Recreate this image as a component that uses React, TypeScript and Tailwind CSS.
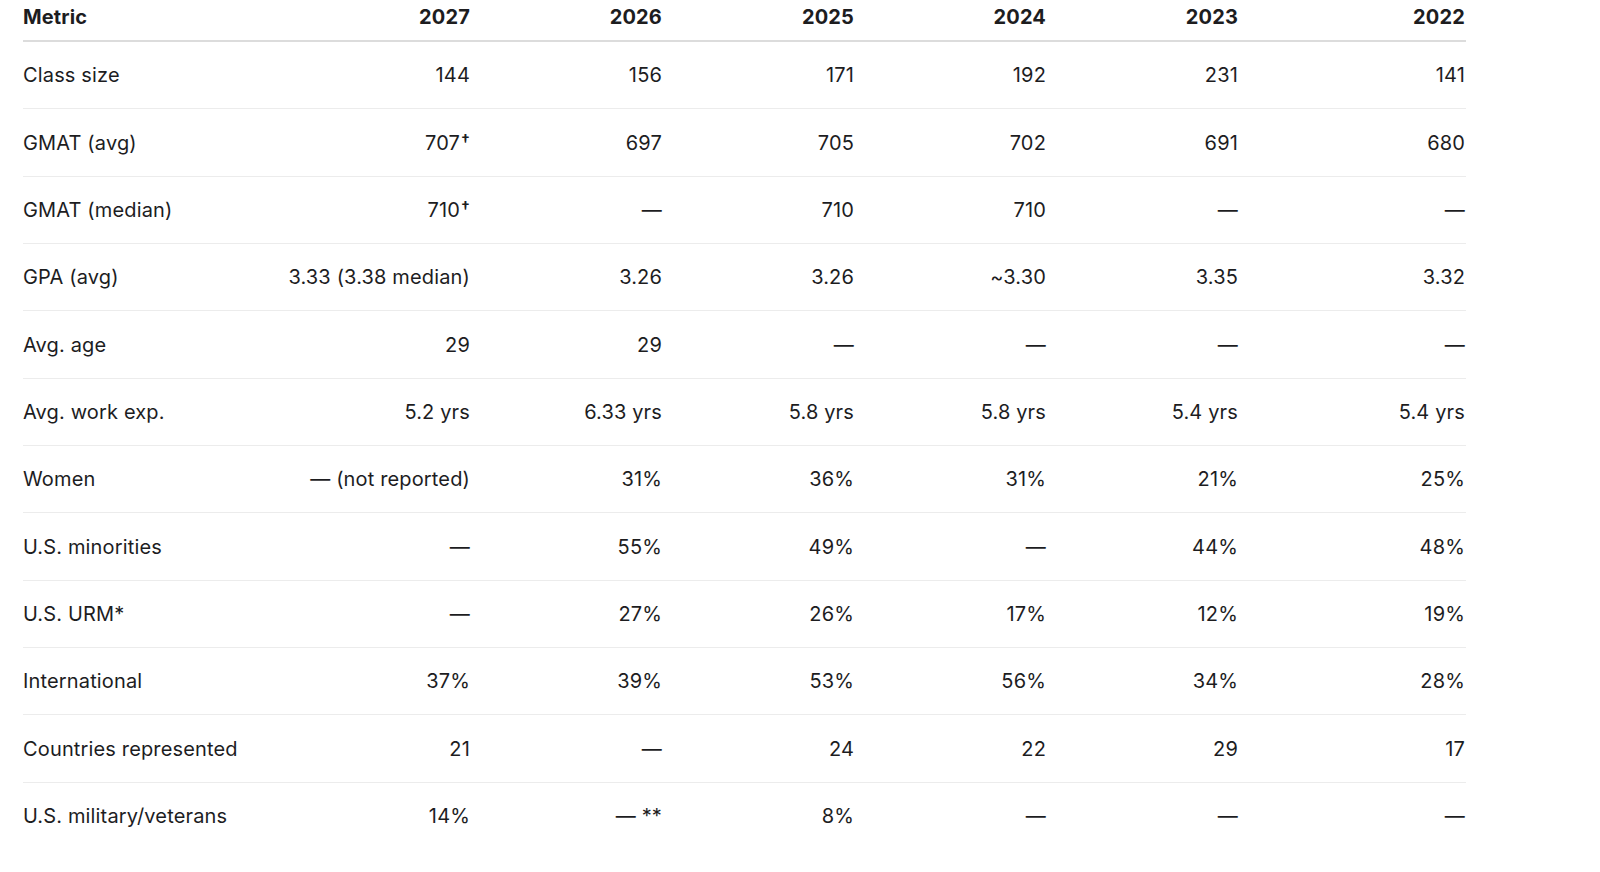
import React from "react";

const years = ["2027", "2026", "2025", "2024", "2023", "2022"];

type Cell = React.ReactNode;

const D = "—";
const dag = (v: string) => (
  <span>
    {v}
    <sup className="text-[16px] font-semibold relative top-[-4px] ml-[1px]">†</sup>
  </span>
);

const rows: [string, Cell[]][] = [
  ["Class size", ["144", "156", "171", "192", "231", "141"]],
  ["GMAT (avg)", [dag("707"), "697", "705", "702", "691", "680"]],
  ["GMAT (median)", [dag("710"), D, "710", "710", D, D]],
  ["GPA (avg)", ["3.33 (3.38 median)", "3.26", "3.26", "~3.30", "3.35", "3.32"]],
  ["Avg. age", ["29", "29", D, D, D, D]],
  ["Avg. work exp.", ["5.2 yrs", "6.33 yrs", "5.8 yrs", "5.8 yrs", "5.4 yrs", "5.4 yrs"]],
  ["Women", ["— (not reported)", "31%", "36%", "31%", "21%", "25%"]],
  ["U.S. minorities", [D, "55%", "49%", D, "44%", "48%"]],
  ["U.S. URM*", [D, "27%", "26%", "17%", "12%", "19%"]],
  ["International", ["37%", "39%", "53%", "56%", "34%", "28%"]],
  ["Countries represented", ["21", D, "24", "22", "29", "17"]],
  ["U.S. military/veterans", ["14%", "— **", "8%", D, D, D]],
];

const grid = "grid grid-cols-[255px_192px_192px_192px_192px_192px_227px]";

export default function App() {
  return (
    <div
      className="min-h-[872px] bg-white text-[#1d1d1f] tracking-[0.15px]"
      style={{ fontFamily: "Inter, 'Noto Sans', sans-serif" }}
    >
      <div className="pl-[23px] w-[1466px]">
        <div className={`${grid} h-[42px] items-center pb-[7px] border-b-2 border-[#dcdcdc] text-[20px] font-bold`}>
          <div>Metric</div>
          {years.map((y) => (
            <div key={y} className="text-right">
              {y}
            </div>
          ))}
        </div>
        {rows.map(([label, cells], i) => (
          <div
            key={label}
            className={`${grid} h-[67.35px] items-center text-[20px] ${
              i < rows.length - 1 ? "border-b border-[#ececec]" : ""
            }`}
          >
            <div>{label}</div>
            {cells.map((c, j) => (
              <div key={j} className="text-right whitespace-nowrap">
                {c}
              </div>
            ))}
          </div>
        ))}
      </div>
    </div>
  );
}
